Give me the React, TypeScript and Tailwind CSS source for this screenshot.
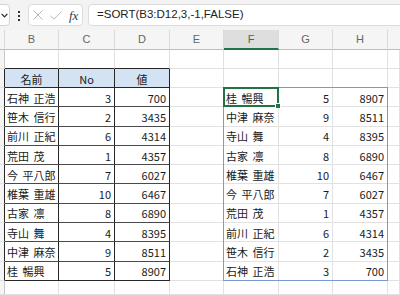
type Person = [string, number, number];

const people: Person[] = [
  ['石神 正浩', 3, 700],
  ['笹木 信行', 2, 3435],
  ['前川 正紀', 6, 4314],
  ['荒田 茂', 1, 4357],
  ['今 平八郎', 7, 6027],
  ['椎葉 重雄', 10, 6467],
  ['古家 凛', 8, 6890],
  ['寺山 舞', 4, 8395],
  ['中津 麻奈', 9, 8511],
  ['桂 暢興', 5, 8907],
];

// =SORT(B3:D12,3,-1,FALSE)
const sorted = [...people].sort((a, b) => b[2] - a[2]);

const letters = ['', 'B', 'C', 'D', 'E', 'F', 'G', 'H', ''];
const sheetRows = Array.from({ length: 13 }, (_, i) => i + 1);

function FormulaBar() {
  return (
    <div className="h-[30px] shrink-0 bg-[#f3f3f3] flex items-center">
      <div className="h-[22px] w-[11px] -ml-px bg-white border border-[#d4d4d4] rounded-r-[4px] flex items-center pl-[1px]">
        <svg width="7" height="5" viewBox="0 0 7 5">
          <path d="M0.6 0.8 3.5 3.8 6.4 0.8" fill="none" stroke="#2a2a2a" strokeWidth="1.2" />
        </svg>
      </div>
      <div className="w-[18px] flex flex-col items-center gap-[2px] pt-px">
        <span className="w-[2px] h-[2px] bg-[#333]" />
        <span className="w-[2px] h-[2px] bg-[#333]" />
        <span className="w-[2px] h-[2px] bg-[#333]" />
      </div>
      <div className="h-[22px] w-[55px] bg-white border border-[#dcdcdc] rounded-[4px] flex items-center pl-[4px]">
        <svg width="10" height="10" viewBox="0 0 10 10">
          <path d="M0.5 0.5 9.5 9.5M9.5 0.5 0.5 9.5" stroke="#b8b8b8" strokeWidth="1" />
        </svg>
        <svg width="12" height="9" viewBox="0 0 12 9" className="ml-[7px]">
          <path d="M0.5 4.8 4 8.2 11.5 0.6" fill="none" stroke="#b8b8b8" strokeWidth="1" />
        </svg>
        <span className="ml-[7px] font-['Liberation_Serif',serif] italic text-[13px] leading-none text-[#3a3a3a]">
          fx
        </span>
      </div>
      <div className="ml-[5px] -mr-[4px] h-[22px] flex-1 bg-white border border-[#dcdcdc] rounded-[4px] flex items-center pl-[8px] font-['Liberation_Sans',sans-serif] text-[11.5px] text-[#222]">
        =SORT(B3:D12,3,-1,FALSE)
      </div>
    </div>
  );
}

function HeaderCell({ c }: { c: number }) {
  const selected = c === 5;
  return (
    <div
      className={`flex items-center justify-center font-['Liberation_Sans',sans-serif] text-[11px] ${
        selected
          ? 'bg-[#dedede] text-[#3c6e50] border-b-2 border-b-[#217346]'
          : 'bg-[#f5f5f5] text-[#666] border-b border-b-[#bdbdbd]'
      } ${c < 8 ? 'border-r border-r-[#dadada]' : ''}`}
    >
      {letters[c]}
    </div>
  );
}

function cellContent(r: number, c: number): { text: string; align: 'l' | 'r' | 'c' } | null {
  if (r === 2) {
    if (c === 1) return { text: '名前', align: 'c' };
    if (c === 2) return { text: 'No', align: 'c' };
    if (c === 3) return { text: '値', align: 'c' };
  }
  if (r >= 3 && r <= 12) {
    const i = r - 3;
    const left = people[i];
    const right = sorted[i];
    if (c === 1) return { text: left[0], align: 'l' };
    if (c === 2) return { text: String(left[1]), align: 'r' };
    if (c === 3) return { text: String(left[2]), align: 'r' };
    if (c === 5) return { text: right[0], align: 'l' };
    if (c === 6) return { text: String(right[1]), align: 'r' };
    if (c === 7) return { text: String(right[2]), align: 'r' };
  }
  return null;
}

function Cell({ r, c }: { r: number; c: number }) {
  const inTable = r >= 2 && r <= 12 && c >= 1 && c <= 3;
  const tableRow = r >= 2 && r <= 12;

  let right = 'border-r-[#e1e1e1]';
  if (c === 0) right = tableRow ? 'border-r-[#262626]' : 'border-r-[#c8c8c8]';
  else if (inTable) right = 'border-r-[#262626]';

  let bottom = 'border-b-[#e1e1e1]';
  if (r === 1 && c >= 1 && c <= 3) bottom = 'border-b-[#262626]';
  else if (inTable) bottom = r === 2 || r === 12 ? 'border-b-[#262626]' : 'border-b-[#4a4a4a]';

  const bg = c === 0 ? 'bg-[#f5f5f5]' : r === 2 && inTable ? 'bg-[#d3e3f4]' : 'bg-white';
  const content = cellContent(r, c);
  const justify =
    content?.align === 'r' ? 'justify-end pr-[3px]' : content?.align === 'c' ? 'justify-center' : 'justify-start pl-[2px]';

  return (
    <div
      className={`border-r border-b ${right} ${bottom} ${bg} flex items-center ${justify} pt-[2px] text-[11px] leading-none [word-spacing:2px] whitespace-nowrap overflow-hidden text-[#1a1a1a]`}
    >
      {content?.text}
    </div>
  );
}

function Sheet() {
  return (
    <div className="relative flex-1 grid grid-cols-[5px_54px_56px_55px_54px_55px_54px_55px_1fr] grid-rows-[20px_19px_19px_repeat(10,19.3px)_1fr]">
      {letters.map((_, c) => (
        <HeaderCell key={`h${c}`} c={c} />
      ))}
      {sheetRows.map(r => letters.map((_, c) => <Cell key={`${r}-${c}`} r={r} c={c} />))}

      {/* spill range F3:H12 */}
      <div className="absolute col-start-6 col-end-9 row-start-4 row-end-14 -left-px -top-px right-0 bottom-0 border border-[#7b98d2] pointer-events-none" />
      {/* active cell F3 */}
      <div className="absolute col-start-6 col-end-7 row-start-4 row-end-5 -left-px -top-px right-0 bottom-0 border-2 border-[#217346] pointer-events-none">
        <div className="absolute -right-[4px] -bottom-[4px] w-[6px] h-[6px] bg-[#217346] border border-white" />
      </div>
    </div>
  );
}

export default function App() {
  return (
    <div className="w-[400px] h-[295px] overflow-hidden flex flex-col bg-white font-['Noto_Sans_CJK_JP','Noto_Sans',sans-serif]">
      <FormulaBar />
      <Sheet />
    </div>
  );
}
